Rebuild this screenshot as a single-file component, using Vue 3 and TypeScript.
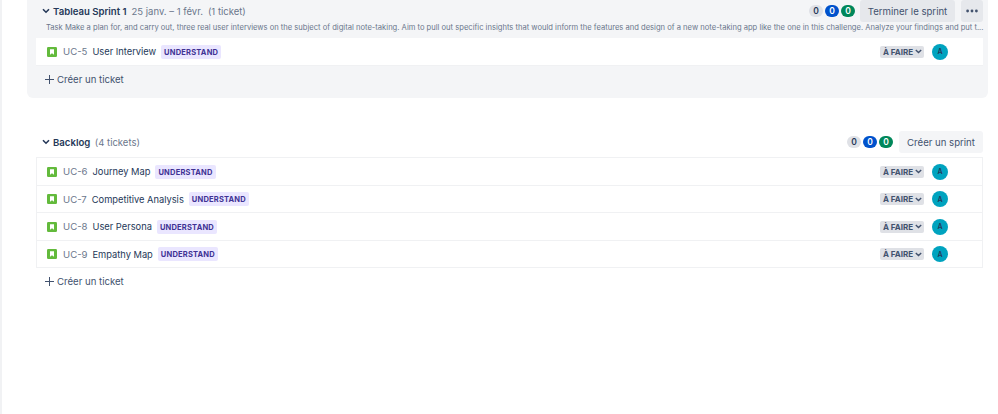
<script setup lang="ts">
interface Ticket { key: string; title: string }
const sprintTickets: Ticket[] = [{ key: 'UC-5', title: 'User Interview' }]
const backlogTickets: Ticket[] = [
  { key: 'UC-6', title: 'Journey Map' },
  { key: 'UC-7', title: 'Competitive Analysis' },
  { key: 'UC-8', title: 'User Persona' },
  { key: 'UC-9', title: 'Empathy Map' },
]
const description = 'Task Make a plan for, and carry out, three real user interviews on the subject of digital note-taking. Aim to pull out specific insights that would inform the features and design of a new note-taking app like the one in this challenge. Analyze your findings and put t...'
</script>

<template>
  <div class="page">
    <section class="sprint">
      <header class="head">
        <svg class="chev" width="8" height="6" viewBox="0 0 8 6"><path d="M1 1.2 4 4.2 7 1.2" fill="none" stroke="#253858" stroke-width="1.6" /></svg>
        <strong class="name">Tableau Sprint 1</strong>
        <span class="meta dates">25 janv. – 1 févr.</span>
        <span class="meta count">(1 ticket)</span>
        <span class="spacer"></span>
        <span class="pill grey">0</span>
        <span class="pill blue">0</span>
        <span class="pill green">0</span>
        <button class="btn solid end">Terminer le sprint</button>
        <button class="btn solid more" aria-label="Plus">
          <svg width="12" height="4" viewBox="0 0 12 4"><circle cx="1.6" cy="2" r="1.4" /><circle cx="6" cy="2" r="1.4" /><circle cx="10.4" cy="2" r="1.4" /></svg>
        </button>
      </header>
      <p class="desc">{{ description }}</p>
      <ul class="list">
        <li v-for="t in sprintTickets" :key="t.key" class="row">
          <svg class="story" width="10" height="10" viewBox="0 0 10 10"><rect width="10" height="10" rx="1.2" fill="#63ba3c" /><path d="M3 2.2h4v5.6L5 6.3 3 7.8z" fill="#fff" /></svg>
          <span class="key">{{ t.key }}</span>
          <span class="title">{{ t.title }}</span>
          <span class="tag">UNDERSTAND</span>
          <span class="spacer"></span>
          <span class="status">À FAIRE<svg width="7" height="5" viewBox="0 0 7 5"><path d="M.8 1 3.5 3.6 6.2 1" fill="none" stroke="#42526e" stroke-width="1.4" /></svg></span>
          <span class="avatar">A</span>
        </li>
      </ul>
      <div class="create">
        <svg width="9" height="9" viewBox="0 0 9 9"><path d="M4.5 0v9M0 4.5h9" stroke="#42526e" stroke-width="1" /></svg>
        Créer un ticket
      </div>
    </section>

    <section class="backlog">
      <header class="head backlog-head">
        <svg class="chev" width="8" height="6" viewBox="0 0 8 6"><path d="M1 1.2 4 4.2 7 1.2" fill="none" stroke="#253858" stroke-width="1.6" /></svg>
        <strong class="name">Backlog</strong>
        <span class="meta tickets">(4 tickets)</span>
        <span class="spacer"></span>
        <span class="pill grey">0</span>
        <span class="pill blue">0</span>
        <span class="pill green">0</span>
        <button class="btn light">Créer un sprint</button>
      </header>
      <ul class="list list-backlog">
        <li v-for="t in backlogTickets" :key="t.key" class="row">
          <svg class="story" width="10" height="10" viewBox="0 0 10 10"><rect width="10" height="10" rx="1.2" fill="#63ba3c" /><path d="M3 2.2h4v5.6L5 6.3 3 7.8z" fill="#fff" /></svg>
          <span class="key">{{ t.key }}</span>
          <span class="title">{{ t.title }}</span>
          <span class="tag">UNDERSTAND</span>
          <span class="spacer"></span>
          <span class="status">À FAIRE<svg width="7" height="5" viewBox="0 0 7 5"><path d="M.8 1 3.5 3.6 6.2 1" fill="none" stroke="#42526e" stroke-width="1.4" /></svg></span>
          <span class="avatar">A</span>
        </li>
      </ul>
      <div class="create">
        <svg width="9" height="9" viewBox="0 0 9 9"><path d="M4.5 0v9M0 4.5h9" stroke="#42526e" stroke-width="1" /></svg>
        Créer un ticket
      </div>
    </section>
  </div>
</template>

<style scoped>
.page {
  width: 998px;
  height: 414px;
  box-sizing: border-box;
  overflow: hidden;
  border-left: 2px solid #f1f2f4;
  padding: 0 10px 0 25px;
  background: #fff;
  font-family: Inter, "Liberation Sans", sans-serif;
  color: #253858;
  font-size: 10px;
}
.sprint {
  height: 98px;
  box-sizing: border-box;
  background: #f4f5f7;
  border-radius: 0 0 6px 6px;
  padding: 0 5px 0 9px;
}
.head {
  height: 22px;
  display: flex;
  align-items: center;
  white-space: nowrap;
}
.chev { margin: 0 3px 0 6px; flex: none; }
.name { font-size: 9.6px; font-weight: 600; color: #253858; }
.meta { font-size: 9.5px; color: #6b778c; }
.dates { margin-left: 5px; }
.count { margin-left: 5px; }
.tickets { margin-left: 4.5px; }
.spacer { flex: 1; }
.pill {
  width: 14px;
  height: 12px;
  margin-left: 2px;
  border-radius: 6px;
  display: flex;
  align-items: center;
  justify-content: center;
  font-size: 8.5px;
  font-weight: 600;
}
.grey { background: #dfe1e6; color: #253858; }
.blue { background: #0052cc; color: #fff; }
.green { background: #00875a; color: #fff; }
.btn {
  height: 22px;
  border: 0;
  border-radius: 3px;
  padding: 0;
  font-family: inherit;
  font-size: 9.6px;
  color: #42526e;
  display: flex;
  align-items: center;
  justify-content: center;
}
.solid { background: #e6e8ec; }
.end { width: 95px; margin-left: 5px; }
.more { width: 22px; margin-left: 6px; }
.more svg { fill: #42526e; }
.light { width: 84px; margin-left: 6px; background: #f4f5f7; }
.desc {
  margin: 0 0 5px;
  height: 11px;
  line-height: 11px;
  padding-left: 10px;
  font-size: 7.6px;
  color: #6b778c;
  white-space: nowrap;
}
.list {
  list-style: none;
  margin: 0;
  padding: 0;
  width: 947px;
}
.row {
  height: 27.5px;
  box-sizing: border-box;
  display: flex;
  align-items: center;
  padding: 1px 35px 0 11px;
  background: #fff;
  border-bottom: 1px solid #f0f1f3;
  white-space: nowrap;
}
.list-backlog {
  border: 1px solid #f0f1f3;
  border-bottom: 0;
  width: 947px;
  box-sizing: border-box;
}
.list-backlog .row { padding-left: 10px; padding-right: 34px; }
.story { flex: none; }
.key { margin-left: 6px; font-size: 9.6px; color: #6b778c; }
.title { margin-left: 5px; font-size: 9.3px; color: #253858; }
.tag {
  margin-left: 5px;
  height: 14px;
  padding: 0 3px;
  border-radius: 2px;
  background: #eae6ff;
  color: #403294;
  font-size: 7.5px;
  font-weight: 700;
  line-height: 15px;
  letter-spacing: 0.2px;
}
.status {
  width: 44px;
  height: 12px;
  box-sizing: border-box;
  padding-left: 3px;
  border-radius: 2px;
  background: #dfe1e6;
  color: #42526e;
  font-size: 8px;
  font-weight: 700;
  display: flex;
  align-items: center;
  gap: 2px;
}
.avatar {
  width: 16px;
  height: 16px;
  margin-left: 8px;
  border-radius: 50%;
  background: #00a3bf;
  color: #253858;
  font-size: 7px;
  font-weight: 600;
  display: flex;
  align-items: center;
  justify-content: center;
}
.create {
  height: 27px;
  display: flex;
  align-items: center;
  gap: 3px;
  padding: 1px 0 0 9px;
  box-sizing: border-box;
  font-size: 9.6px;
  color: #42526e;
}
.backlog .create { padding-top: 0; height: 26px; }
.backlog { padding: 33px 5px 0 9px; }
.backlog-head { margin-bottom: 4px; }
</style>
